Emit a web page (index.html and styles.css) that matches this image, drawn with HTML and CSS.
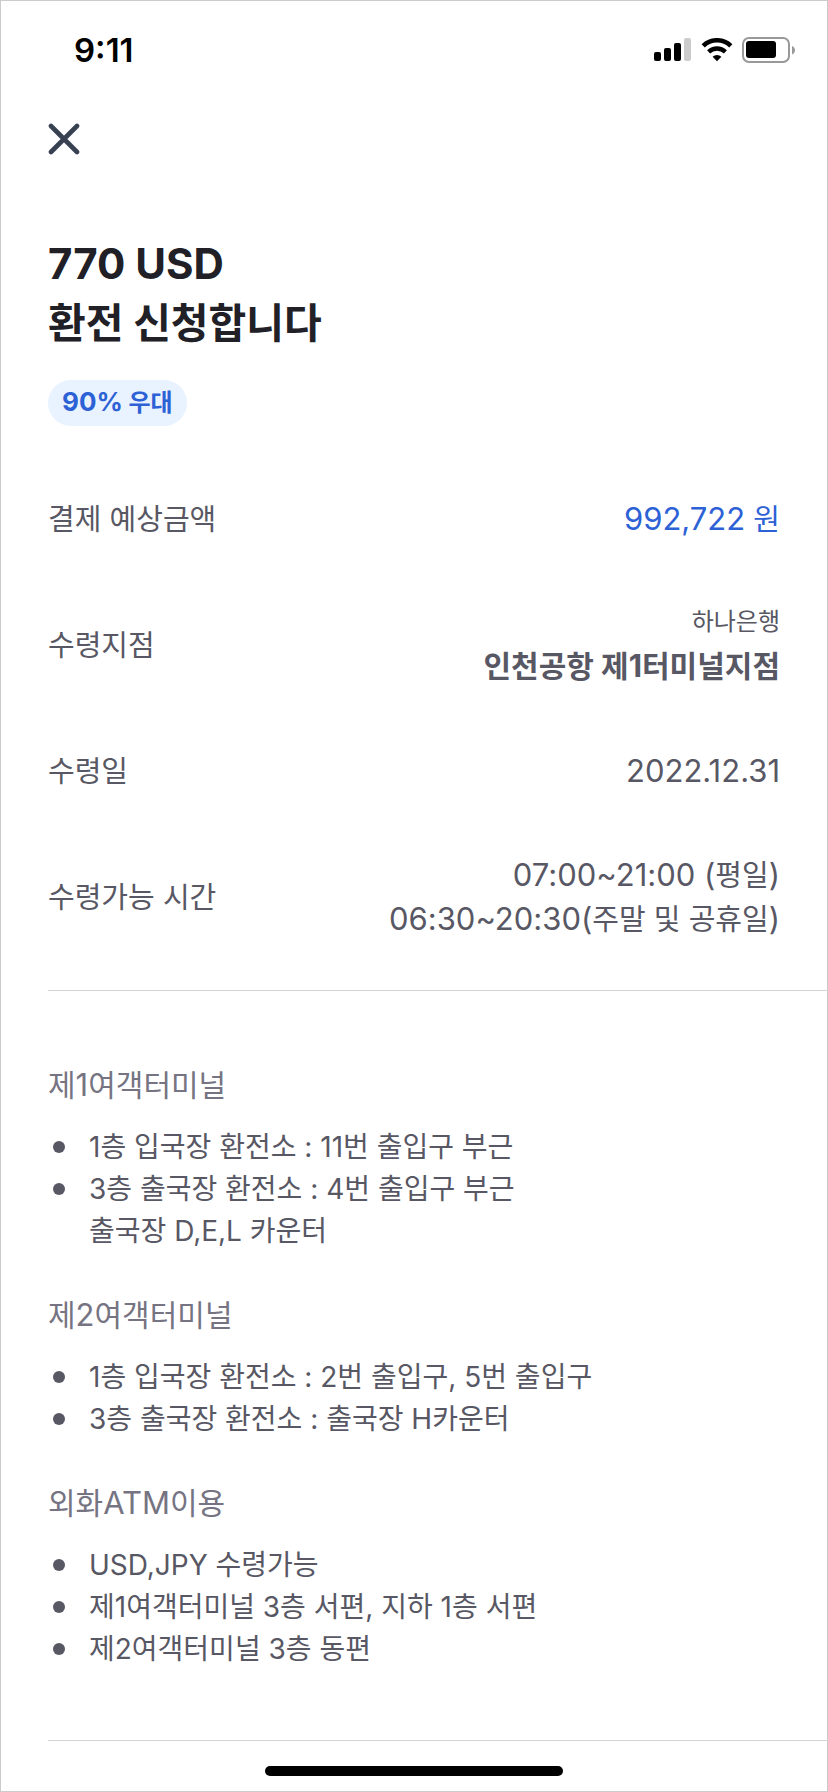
FILE: index.html
```html
<!DOCTYPE html>
<html lang="ko">
<head>
<meta charset="utf-8">
<meta name="viewport" content="width=device-width, initial-scale=1">
<title>환전 신청</title>
<link rel="stylesheet" href="styles.css">
</head>
<body>
<div class="screen">
  <header class="status">
    <time class="clock">9:11</time>
    <div class="indicators">
      <svg width="38" height="24" viewBox="0 0 38 24" aria-hidden="true">
        <rect x="0" y="14" width="7" height="9" rx="2"/>
        <rect x="10" y="10" width="7" height="13" rx="2"/>
        <rect x="20" y="5" width="7" height="18" rx="2"/>
        <rect x="30" y="0" width="7" height="23" rx="2" fill="#ccc"/>
      </svg>
      <svg width="32" height="24" viewBox="0 0 32 24" aria-hidden="true">
        <path d="M2.2 7.8a20 20 0 0 1 27.6 0" fill="none" stroke="#000" stroke-width="4.6"/>
        <path d="M7.6 13.8a12.4 12.4 0 0 1 16.8 0" fill="none" stroke="#000" stroke-width="4.4"/>
        <path d="M11.6 18.8a6.6 6.6 0 0 1 8.8 0L16 23.2z"/>
      </svg>
      <svg width="54" height="26" viewBox="0 0 54 26" aria-hidden="true">
        <rect x="1" y="1" width="46" height="24" rx="6" fill="none" stroke="#999" stroke-width="2"/>
        <rect x="4" y="4" width="30" height="17" rx="3"/>
        <path d="M50 9c4 1.500 4 7 0 8.500z" fill="#999"/>
      </svg>
    </div>
  </header>

  <nav class="topbar">
    <button class="close" type="button" aria-label="닫기">
      <svg width="32" height="32" viewBox="0 0 32 32" aria-hidden="true"><path d="M3 3l26 26M29 3L3 29" fill="none" stroke="#374151" stroke-width="4.600" stroke-linecap="round"/></svg>
    </button>
  </nav>

  <main>
    <section class="summary">
      <h1 class="title"><span class="amount">770 USD</span><br>환전 신청합니다</h1>
      <span class="badge"><span class="n">90%</span> 우대</span>
    </section>

    <dl class="details">
      <div class="row"><dt>결제 예상금액</dt><dd class="price"><span class="n">992,722</span> 원</dd></div>
      <div class="row"><dt>수령지점</dt><dd><span class="bank">하나은행</span><strong class="branch">인천공항 제<span class="n">1</span>터미널지점</strong></dd></div>
      <div class="row"><dt>수령일</dt><dd><span class="n">2022.12.31</span></dd></div>
      <div class="row"><dt>수령가능 시간</dt><dd><span class="n">07:00~21:00 (</span>평일<span class="n">)</span><br><span class="n">06:30~20:30(</span>주말 및 공휴일<span class="n">)</span></dd></div>
    </dl>

    <div class="guide">
      <section class="place">
        <h2>제<span class="n">1</span>여객터미널</h2>
        <ul>
          <li>1층 입국장 환전소 : 11번 출입구 부근</li>
          <li>3층 출국장 환전소 : 4번 출입구 부근<br>출국장 D,E,L 카운터</li>
        </ul>
      </section>
      <section class="place">
        <h2>제<span class="n">2</span>여객터미널</h2>
        <ul>
          <li>1층 입국장 환전소 : 2번 출입구, 5번 출입구</li>
          <li>3층 출국장 환전소 : 출국장 H카운터</li>
        </ul>
      </section>
      <section class="place">
        <h2>외화<span class="n">ATM</span>이용</h2>
        <ul>
          <li>USD,JPY 수령가능</li>
          <li>제1여객터미널 3층 서편, 지하 1층 서편</li>
          <li>제2여객터미널 3층 동편</li>
        </ul>
      </section>
    </div>
  </main>

  <footer class="home"><div class="home-bar"></div></footer>
</div>
</body>
</html>
```
FILE: styles.css
```css
* {
  box-sizing: border-box;
  margin: 0;
  padding: 0;
}

body {
  background: #fff;
  color: #585764;
  font-family: Inter, "Noto Sans CJK KR", sans-serif;
  font-size: 29px;
  line-height: 44px;
}

.screen {
  display: flex;
  flex-direction: column;
  min-height: 100vh;
  border: 1px solid #ccc;
}

/* Latin letters and digits run slightly larger than the Hangul beside them */
.n {
  font-family: Inter, sans-serif;
  font-size: 31px;
  line-height: 1;
}

.status {
  display: flex;
  align-items: center;
  justify-content: space-between;
  height: 98px;
  padding: 0 31px 0 73px;
}

.clock {
  color: #000;
  font-size: 33px;
  font-weight: 600;
}

.indicators {
  display: flex;
  align-items: center;
  gap: 9px;
}

.topbar {
  display: flex;
  padding: 24px 47px;
}

.close {
  display: flex;
  border: 0;
  background: none;
  cursor: pointer;
}

.summary {
  padding: 56px 47px 0;
}

.title {
  color: #202026;
  font-size: 41px;
  font-weight: 700;
  line-height: 59px;
}

.amount {
  font-size: 42px;
  line-height: 1;
}

.badge {
  display: inline-block;
  margin-top: 27px;
  padding: 0 14px;
  border-radius: 23px;
  background: #e9f2ff;
  color: #2d61d6;
  font-size: 24px;
  font-weight: 700;
  line-height: 46px;
}

.badge .n {
  font-size: 26px;
}

.details {
  display: flex;
  flex-direction: column;
  gap: 60px;
  margin-left: 47px;
  padding: 72px 47px 48px 0;
  border-bottom: 1px solid #d4d4d8;
}

.row {
  display: flex;
  align-items: center;
  justify-content: space-between;
}

.row dd {
  text-align: right;
}

.price {
  color: #2d61d6;
}

.bank {
  display: block;
  font-size: 24px;
  line-height: 40px;
}

.branch {
  display: block;
  font-size: 30px;
  font-weight: 700;
  line-height: 48px;
}

.guide {
  display: flex;
  flex-direction: column;
  gap: 42px;
  margin-left: 47px;
  padding: 73px 47px 70px 0;
  border-bottom: 1px solid #d4d4d8;
  line-height: 42px;
}

.place h2 {
  margin-bottom: 20px;
  color: #767482;
  font-size: 30px;
  font-weight: 400;
}

.place ul {
  list-style: none;
  font-size: 28px;
}

.place li {
  position: relative;
  padding-left: 41px;
}

.place li::before {
  content: "";
  position: absolute;
  top: 15px;
  left: 5px;
  width: 12px;
  height: 12px;
  border-radius: 50%;
  background: #585764;
}

.home {
  display: flex;
  justify-content: center;
  padding: 25px 0 14px;
}

.home-bar {
  width: 36%;
  height: 10px;
  border-radius: 5px;
  background: #000;
}
```
